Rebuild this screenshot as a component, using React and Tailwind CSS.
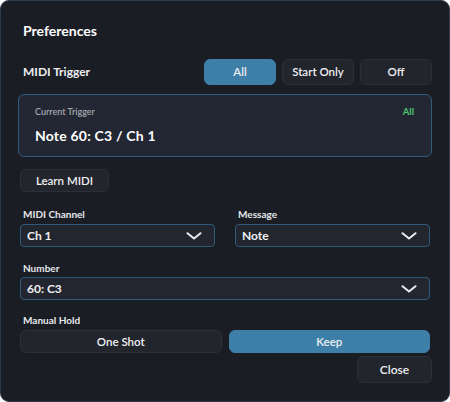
import { useState } from "react";

// Preferences dialog: MIDI trigger setup

function Chevron() {
  return (
    <svg width="16" height="8" viewBox="0 0 16 8" fill="none" className="shrink-0">
      <path d="M1.5 1.2 L8 6.6 L14.5 1.2" stroke="#e8eaee" strokeWidth="2" strokeLinecap="round" strokeLinejoin="round" />
    </svg>
  );
}

function Select({ value, className = "" }) {
  return (
    <div
      className={`h-[23px] flex items-center justify-between pl-[6px] pr-[12px] rounded-[4px] border border-[#2f5b78] bg-[#23262e] text-[12px] font-bold text-[#eef0f3] ${className}`}
    >
      <span>{value}</span>
      <Chevron />
    </div>
  );
}

function Label({ children, className = "" }) {
  return (
    <div className={`h-[14px] leading-[14px] text-[10px] font-bold text-[#e6e8ec] pl-[3px] ${className}`}>
      {children}
    </div>
  );
}

export default function App() {
  const [mode, setMode] = useState("All");
  const [hold, setHold] = useState("Keep");

  return (
    <div
      className="w-[450px] h-[402px] bg-white"
      style={{ fontFamily: "Lato, 'Noto Sans', sans-serif" }}
    >
      <div className="w-full h-full flex flex-col rounded-[9px] border border-[#2d3a4a] bg-[#1a1d24] px-[17px] pt-[20px]">
        <h1 className="h-[20px] leading-[20px] text-[14px] font-bold text-white pl-[5px]">Preferences</h1>

        <div className="mt-[18px] h-[26px] flex items-center justify-between">
          <span className="pl-[5px] text-[12px] font-bold text-[#eceef2]">MIDI Trigger</span>
          <div className="flex gap-[6px]">
            {["All", "Start Only", "Off"].map((m) => (
              <button
                key={m}
                onClick={() => setMode(m)}
                className={`w-[72px] h-[26px] rounded-[6px] text-[11.5px] font-semibold text-[#eef0f3] border ${
                  mode === m ? "bg-[#3d7fa7] border-[#3d7fa7]" : "bg-[#22252c] border-[#2b2f37]"
                }`}
              >
                {m}
              </button>
            ))}
          </div>
        </div>

        <div className="mt-[9px] h-[63px] rounded-[6px] border border-[#325a7a] bg-[#222733] px-[16px] pt-[10px]">
          <div className="flex justify-between items-center h-[14px]">
            <span className="text-[9px] font-semibold text-[#a3a8b1]">Current Trigger</span>
            <span className="text-[9.5px] font-bold text-[#4cc46a] pr-[1px]">All</span>
          </div>
          <div className="mt-[7px] text-[14px] tracking-[0.2px] font-bold text-white leading-[20px]">Note 60: C3 / Ch 1</div>
        </div>

        <div className="px-[2px] flex flex-col">
          <button className="mt-[12px] w-[89px] h-[23px] rounded-[6px] border border-[#2b2f37] bg-[#22252c] text-[11.5px] font-semibold text-[#eef0f3]">
            Learn MIDI
          </button>

          <div className="mt-[15px] grid grid-cols-2 gap-x-[20px]">
            <div>
              <Label>MIDI Channel</Label>
              <Select value="Ch 1" className="mt-[3px]" />
            </div>
            <div>
              <Label>Message</Label>
              <Select value="Note" className="mt-[3px]" />
            </div>
          </div>

          <Label className="mt-[14px]">Number</Label>
          <Select value="60: C3" className="mt-[2px]" />

          <Label className="mt-[13px]">Manual Hold</Label>
          <div className="mt-[3px] grid grid-cols-2 gap-x-[7px]">
            {["One Shot", "Keep"].map((h) => (
              <button
                key={h}
                onClick={() => setHold(h)}
                className={`h-[23px] rounded-[6px] text-[11.5px] font-semibold text-[#eef0f3] border ${
                  hold === h ? "bg-[#3d7fa7] border-[#3d7fa7]" : "bg-[#22252c] border-[#2b2f37]"
                }`}
              >
                {h}
              </button>
            ))}
          </div>
        </div>

        <div className="mt-[3px] flex justify-end">
          <button className="w-[75px] h-[27px] rounded-[6px] border border-[#2b2f37] bg-[#22252c] text-[12px] font-semibold text-[#eef0f3]">
            Close
          </button>
        </div>
      </div>
    </div>
  );
}
